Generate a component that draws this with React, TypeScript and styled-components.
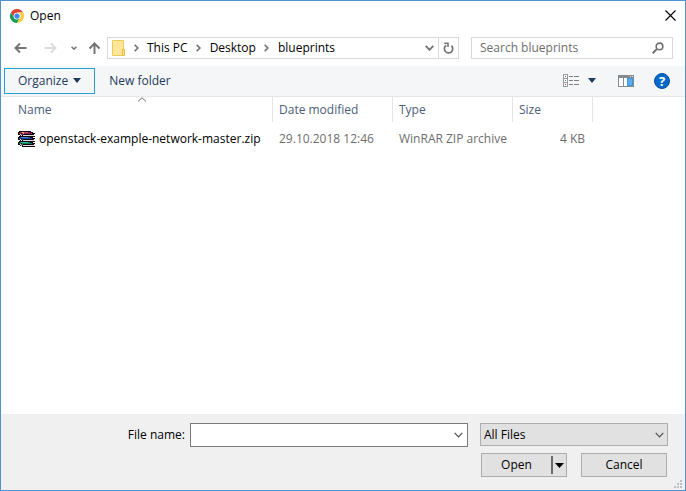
import React, { useState } from "react";
import styled, { createGlobalStyle, css } from "styled-components";

const GlobalStyle = createGlobalStyle`
  *, *::before, *::after { box-sizing: border-box; }
  body { margin: 0; background: #fff; }
  body, button, input, select {
    font-family: "Open Sans", "Noto Sans", sans-serif;
    font-size: 12px;
    line-height: 16px;
    color: #000;
  }
  button, input, select { margin: 0; padding: 0; border: 0; background: none; border-radius: 0; outline: 0; }
  svg { display: block; flex: none; }
`;

const Dialog = styled.main`
  display: flex;
  flex-direction: column;
  min-height: 100vh;
  border: 1px solid #4f93d2;
  background: #fff;
`;

const TitleBar = styled.header`
  display: flex;
  align-items: center;
  height: 29px;
  padding: 0 7px 0 9px;
  gap: 6px;
`;

const Title = styled.h1`
  flex: 1;
  margin: 0;
  font-size: 12px;
  font-weight: 400;
`;

const IconButton = styled.button<{ $width: number }>`
  display: flex;
  align-items: center;
  justify-content: center;
  flex: none;
  width: ${(p) => p.$width}px;
  height: 20px;
`;

const NavigationRow = styled.div`
  display: flex;
  align-items: center;
  height: 36px;
  padding: 0 12px 0 11px;
`;

const NavButtons = styled.nav`
  display: flex;
  align-items: center;
  width: 95px;
  flex: none;
`;

const AddressBar = styled.div`
  display: flex;
  align-items: center;
  flex: 1 1 352px;
  height: 22px;
  border: 1px solid #d9d9d9;
  min-width: 0;
`;

const Breadcrumbs = styled.div`
  display: flex;
  align-items: center;
  flex: 1;
  min-width: 0;
  padding-left: 4px;
`;

const Crumb = styled.a`
  color: #000;
  text-decoration: none;
  white-space: nowrap;
`;

const CrumbArrow = styled.span`
  display: flex;
  justify-content: center;
  width: 22px;
  flex: none;
`;

const RefreshCell = styled.div`
  display: flex;
  align-items: center;
  height: 20px;
  border-left: 1px solid #d9d9d9;
`;

const SearchBox = styled.label`
  display: flex;
  align-items: center;
  flex: 0 0 202px;
  height: 22px;
  margin-left: 12px;
  padding: 0 8px;
  border: 1px solid #d9d9d9;
`;

const SearchInput = styled.input`
  flex: 1;
  min-width: 0;
  &::placeholder { color: #6d6d6d; opacity: 1; }
`;

const Toolbar = styled.div`
  display: flex;
  align-items: center;
  height: 31px;
  padding: 0 12px 1px 3px;
  background: #f4f6f8;
  border-bottom: 1px solid #e6e7e8;
`;

const ToolbarButton = styled.button<{ $focused?: boolean }>`
  display: flex;
  align-items: center;
  gap: 5px;
  height: 26px;
  padding: 0 13px;
  border: 1px solid ${(p) => (p.$focused ? "#26a0da" : "transparent")};
  color: #1e395b;
  white-space: nowrap;
`;

const ToolbarEnd = styled.div`
  display: flex;
  align-items: center;
  margin-left: auto;
`;

const FileList = styled.section`
  flex: 1;
  padding-left: 11px;
  overflow: hidden;
`;

const FileTable = styled.table`
  table-layout: fixed;
  width: 581px;
  border-collapse: separate;
  border-spacing: 0;
`;

const Column = styled.col<{ $width: number }>`
  width: ${(p) => p.$width}px;
`;

const HeaderCell = styled.th`
  position: relative;
  height: 25px;
  padding: 0 6px;
  border-right: 1px solid #e5e5e5;
  color: #4c607a;
  font-weight: 400;
  text-align: left;
`;

const SortMark = styled.span`
  position: absolute;
  top: 0;
  left: 50%;
  transform: translateX(-50%);
`;

const Cell = styled.td<{ $primary?: boolean; $end?: boolean }>`
  height: 34px;
  padding: 0 8px 0 6px;
  color: ${(p) => (p.$primary ? "#000" : "#6d6d6d")};
  text-align: ${(p) => (p.$end ? "right" : "left")};
  white-space: nowrap;
`;

const FileName = styled.span`
  display: flex;
  align-items: center;
  gap: 4px;
`;

const Footer = styled.footer`
  display: grid;
  grid-template-columns: 184px 1fr 188px;
  grid-template-rows: 24px 24px;
  row-gap: 6px;
  align-items: start;
  position: relative;
  padding: 9px 17px 13px 0;
  background: #f0f0f0;
`;

const FieldLabel = styled.label`
  align-self: center;
  text-align: right;
`;

const ComboBox = styled.div`
  display: flex;
  align-items: center;
  height: 24px;
  margin: 0 12px 0 5px;
  border: 1px solid #7a7a7a;
  background: #fff;
`;

const ComboInput = styled.input`
  flex: 1;
  min-width: 0;
  padding: 0 4px;
`;

const SelectBox = styled.div`
  position: relative;
`;

const Select = styled.select`
  appearance: none;
  display: block;
  width: 100%;
  height: 23px;
  padding: 0 24px 0 3px;
  border: 1px solid #adadad;
  background: #e1e1e1;
`;

const SelectArrow = styled.span`
  position: absolute;
  right: 4px;
  top: 9px;
  pointer-events: none;
`;

const Actions = styled.div`
  grid-column: 3;
  display: flex;
  justify-content: space-between;
  padding: 0 1px;
`;

const buttonFace = css`
  width: 86px;
  height: 24px;
  border: 1px solid #adadad;
  background: #e1e1e1;
`;

const PushButton = styled.button`
  ${buttonFace}
`;

const SplitButton = styled.div`
  ${buttonFace}
  display: flex;
  align-items: center;
`;

const SplitMain = styled.button`
  flex: 1;
  height: 18px;
  border-right: 2px solid #6a6a6a;
`;

const SizeGrip = styled.span`
  position: absolute;
  right: 3px;
  bottom: 2px;
`;

const ChromeLogo = () => (
  <svg width="14" height="14" viewBox="0 0 48 48">
    <circle cx="24" cy="24" r="24" fill="#fff" />
    <path d="M24 24 13.6 30 3.2 12A24 24 0 0 1 44.8 12L24 12Z" fill="#db4437" />
    <path d="M3.2 12 13.6 30A12 12 0 0 0 24 36L24 48A24 24 0 0 1 3.2 12Z" fill="#0f9d58" />
    <path d="M24 36 34.4 30 24 48Z" fill="#0f9d58" />
    <path d="M24 12H44.8A24 24 0 0 1 24 48L34.4 30A12 12 0 0 0 24 12Z" fill="#ffcd40" />
    <circle cx="24" cy="24" r="11.5" fill="#fff" />
    <circle cx="24" cy="24" r="9" fill="#4285f4" />
  </svg>
);

const CloseIcon = () => (
  <svg width="11" height="11" viewBox="0 0 11 11">
    <path d="M.5.5l10 10M10.5.5l-10 10" stroke="#000" strokeWidth="1.1" />
  </svg>
);

const ArrowIcon = ({ direction, color }: { direction: "left" | "right" | "up"; color: string }) => {
  const paths = {
    left: "M12.500 6H1.500M6 1.500L1.500 6L6 10.500",
    right: "M.5 6H11.500M7 1.500L11.500 6L7 10.500",
    up: "M6.500 12V1.500M1.500 6.500L6.500 1.500L11.500 6.500",
  };
  return (
    <svg width="13" height="12" viewBox="0 0 13 12">
      <path d={paths[direction]} fill="none" stroke={color} strokeWidth="2" />
    </svg>
  );
};

const ChevronDown = ({ size, color, weight }: { size: number; color: string; weight: number }) => (
  <svg width={size} height="6" viewBox={`0 0 ${size} 6`}>
    <path d={`M.7 .8L${size / 2} 4.800L${size - 0.7} .8`} fill="none" stroke={color} strokeWidth={weight} />
  </svg>
);

const RecentChevron = () => (
  <svg width="6" height="5" viewBox="0 0 6 5">
    <path d="M.6 .8L3 3.200L5.400 .8" fill="none" stroke="#757575" strokeWidth="1.6" />
  </svg>
);

const ChevronRight = () => (
  <svg width="5" height="8" viewBox="0 0 5 8">
    <path d="M.7 .9L3.900 4L.7 7.100" fill="none" stroke="#757575" strokeWidth="1.7" />
  </svg>
);

const CaretDown = ({ color, width }: { color: string; width: number }) => (
  <svg width={width} height="5" viewBox="0 0 8 4" preserveAspectRatio="none">
    <path d="M0 0H8L4 4Z" fill={color} />
  </svg>
);

const FolderIcon = () => (
  <svg width="13" height="16" viewBox="0 0 13 16">
    <path d="M.5 .5H11.500V15.500H.5Z" fill="#ffe79a" stroke="#f0cb5b" />
    <path d="M10.500 9.500H12.500V15.500H10.500Z" fill="#ffe79a" stroke="#e8bd3c" />
  </svg>
);

const RefreshIcon = () => (
  <svg width="11" height="12" viewBox="0 0 11 12">
    <path d="M3.200 3.200A4.200 4.200 0 1 0 8.500 3.700" fill="none" stroke="#757575" strokeWidth="1.7" />
    <path d="M1.200 1.200H5V5" fill="none" stroke="#757575" strokeWidth="1.6" />
  </svg>
);

const SearchIcon = () => (
  <svg width="12" height="12" viewBox="0 0 12 12">
    <circle cx="7.500" cy="4.400" r="3.300" fill="none" stroke="#707070" strokeWidth="1.6" />
    <path d="M5 6.900L.7 11.200" stroke="#707070" strokeWidth="2" />
  </svg>
);

const ViewIcon = () => (
  <svg width="16" height="13" viewBox="0 0 16 13" shapeRendering="crispEdges">
    <path d="M.5 .5H4.500V12.500H.5ZM.5 4.500H4.500M.5 8.500H4.500" fill="#fff" stroke="#9a9a9a" />
    <path d="M2 2h1v1H2z" fill="#666" />
    <path d="M2 6h1v1H2z" fill="#2a8be0" />
    <path d="M2 10h1v1H2z" fill="#d03030" />
    <path d="M6 2.500H10M11 2.500H16M6 6.500H10M11 6.500H16M6 10.500H10M11 10.500H16" stroke="#808080" />
  </svg>
);

const PreviewPaneIcon = () => (
  <svg width="16" height="12" viewBox="0 0 16 12" shapeRendering="crispEdges">
    <path d="M0 0H16V12H0Z" fill="#858a8f" />
    <path d="M1 3H5V11H1ZM6 3H9V11H6Z" fill="#fff" />
    <path d="M9 3H15V11H9Z" fill="#3d97e6" />
    <path d="M10 4H14V10H10Z" fill="#5aabef" />
    <path d="M12 1H13V2H12ZM14 1H15V2H14Z" fill="#e8e8e8" />
  </svg>
);

const HelpBadge = styled.span`
  display: flex;
  align-items: center;
  justify-content: center;
  width: 16px;
  height: 16px;
  border: 1px solid #0a4fa0;
  border-radius: 50%;
  background: #0568cb;
  color: #fff;
  font-size: 13px;
  font-weight: 700;
`;

const books = [
  { top: 0, cover: "#98195c", light: "#c2498a" },
  { top: 5, cover: "#12499c", light: "#3a80cc" },
  { top: 10, cover: "#0f7f66", light: "#35b894" },
];

const ArchiveIcon = () => (
  <svg width="17" height="16" viewBox="0 0 17 16" shapeRendering="crispEdges">
    {books.map((book) => (
      <g key={book.top} transform={`translate(0 ${book.top})`}>
        <path d="M1 0H13V1H15V2H17V3H16V5H17V6H4V5H2V4H0V1H1Z" fill="#15060f" />
        <path d="M2 1H12V2H14V3H4V2H2Z" fill={book.cover} />
        <path d="M3 1H10V2H3Z" fill={book.light} />
        <path d="M1 2H3V3H5V4H3V3H1Z" fill={book.cover} />
        <path d="M5 4H16V5H5Z" fill="#dcdcdc" />
        <path d="M2 3H3V4H4V5H3V4H2Z" fill="#dcdcdc" />
      </g>
    ))}
    <path d="M4 1H6V2H4ZM5 2H6V3H5Z" fill="#e8b83a" />
  </svg>
);

const GripIcon = () => (
  <svg width="8" height="8" viewBox="0 0 8 8" shapeRendering="crispEdges">
    <path d="M6 0h2v2H6zM3 3h2v2H3zM6 3h2v2H6zM0 6h2v2H0zM3 6h2v2H3zM6 6h2v2H6z" fill="#bfbfbf" />
  </svg>
);

const crumbs = ["This PC", "Desktop", "blueprints"];

const files = [
  {
    name: "openstack-example-network-master.zip",
    modified: "29.10.2018 12:46",
    type: "WinRAR ZIP archive",
    size: "4 KB",
  },
];

export default function App() {
  const [fileName, setFileName] = useState("");

  return (
    <>
      <GlobalStyle />
      <Dialog>
        <TitleBar>
          <ChromeLogo />
          <Title>Open</Title>
          <IconButton $width={15} aria-label="Close">
            <CloseIcon />
          </IconButton>
        </TitleBar>

        <NavigationRow>
          <NavButtons aria-label="History">
            <IconButton $width={16} aria-label="Back">
              <ArrowIcon direction="left" color="#757575" />
            </IconButton>
            <IconButton $width={44} aria-label="Forward" disabled>
              <ArrowIcon direction="right" color="#dcdcdc" />
            </IconButton>
            <IconButton $width={4} aria-label="Recent locations">
              <RecentChevron />
            </IconButton>
            <IconButton $width={36} aria-label="Up">
              <ArrowIcon direction="up" color="#757575" />
            </IconButton>
          </NavButtons>
          <AddressBar>
            <Breadcrumbs>
              <FolderIcon />
              {crumbs.map((crumb) => (
                <React.Fragment key={crumb}>
                  <CrumbArrow>
                    <ChevronRight />
                  </CrumbArrow>
                  <Crumb href="#">{crumb}</Crumb>
                </React.Fragment>
              ))}
            </Breadcrumbs>
            <IconButton $width={18} aria-label="Previous locations">
              <ChevronDown size={9} color="#757575" weight={1.9} />
            </IconButton>
            <RefreshCell>
              <IconButton $width={19} aria-label="Refresh">
                <RefreshIcon />
              </IconButton>
            </RefreshCell>
          </AddressBar>
          <SearchBox>
            <SearchInput type="text" placeholder="Search blueprints" aria-label="Search blueprints" />
            <SearchIcon />
          </SearchBox>
        </NavigationRow>

        <Toolbar>
          <ToolbarButton $focused>
            Organize
            <CaretDown color="#1e395b" width={8} />
          </ToolbarButton>
          <ToolbarButton>New folder</ToolbarButton>
          <ToolbarEnd>
            <IconButton $width={24} aria-label="Change view">
              <ViewIcon />
            </IconButton>
            <IconButton $width={18} aria-label="More view options">
              <CaretDown color="#1e395b" width={8} />
            </IconButton>
            <IconButton $width={50} aria-label="Preview pane">
              <PreviewPaneIcon />
            </IconButton>
            <IconButton $width={22} aria-label="Help">
              <HelpBadge>?</HelpBadge>
            </IconButton>
          </ToolbarEnd>
        </Toolbar>

        <FileList>
          <FileTable>
            <colgroup>
              <Column $width={261} />
              <Column $width={120} />
              <Column $width={120} />
              <Column $width={80} />
            </colgroup>
            <thead>
              <tr>
                <HeaderCell aria-sort="ascending">
                  Name
                  <SortMark>
                    <svg width="9" height="5" viewBox="0 0 9 5">
                      <path d="M.5 4.500L4.500 .7L8.500 4.500" fill="none" stroke="#6d6d6d" />
                    </svg>
                  </SortMark>
                </HeaderCell>
                <HeaderCell>Date modified</HeaderCell>
                <HeaderCell>Type</HeaderCell>
                <HeaderCell>Size</HeaderCell>
              </tr>
            </thead>
            <tbody>
              {files.map((file) => (
                <tr key={file.name}>
                  <Cell $primary>
                    <FileName>
                      <ArchiveIcon />
                      {file.name}
                    </FileName>
                  </Cell>
                  <Cell>{file.modified}</Cell>
                  <Cell>{file.type}</Cell>
                  <Cell $end>{file.size}</Cell>
                </tr>
              ))}
            </tbody>
          </FileTable>
        </FileList>

        <Footer>
          <FieldLabel htmlFor="file-name">File name:</FieldLabel>
          <ComboBox>
            <ComboInput
              id="file-name"
              type="text"
              value={fileName}
              onChange={(event) => setFileName(event.target.value)}
            />
            <IconButton $width={17} aria-label="Recent file names">
              <ChevronDown size={9} color="#505050" weight={1.2} />
            </IconButton>
          </ComboBox>
          <SelectBox>
            <Select aria-label="File type">
              <option>All Files</option>
            </Select>
            <SelectArrow>
              <ChevronDown size={9} color="#505050" weight={1.2} />
            </SelectArrow>
          </SelectBox>
          <Actions>
            <SplitButton>
              <SplitMain>Open</SplitMain>
              <IconButton $width={13} aria-label="More open options">
                <CaretDown color="#000" width={9} />
              </IconButton>
            </SplitButton>
            <PushButton>Cancel</PushButton>
          </Actions>
          <SizeGrip>
            <GripIcon />
          </SizeGrip>
        </Footer>
      </Dialog>
    </>
  );
}
